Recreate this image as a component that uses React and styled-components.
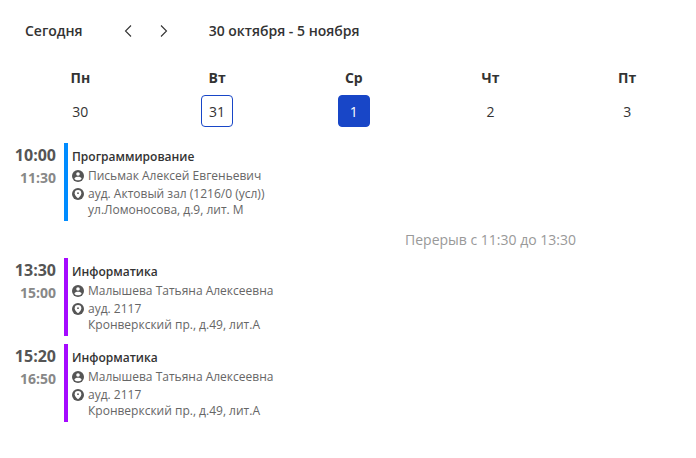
import React from "react";
import styled, { createGlobalStyle } from "styled-components";

const GlobalStyle = createGlobalStyle`
  *, *::before, *::after { box-sizing: border-box; }
  body {
    margin: 0;
    background: #fff;
    color: #333;
    font-family: "Open Sans", "Noto Sans", sans-serif;
    font-size: 14px;
    line-height: 20px;
  }
`;

const Page = styled.main`
  padding: 16px 12px;
  overflow: hidden;
`;

const Toolbar = styled.header`
  display: flex;
  align-items: center;
  height: 30px;
  padding-left: 13px;
`;

const TextButton = styled.button`
  margin: 0 31px 0 0;
  padding: 0;
  border: 0;
  background: none;
  color: inherit;
  font: inherit;
  font-weight: 600;
  cursor: pointer;
`;

const Pager = styled.nav`
  display: flex;
  gap: 8px;
  margin-right: 31px;
`;

const ArrowButton = styled.button`
  display: grid;
  place-items: center;
  width: 28px;
  height: 28px;
  padding: 0;
  border: 0;
  background: none;
  color: inherit;
  cursor: pointer;
`;

const Period = styled.h1`
  margin: 0;
  font-size: 14px;
  line-height: 20px;
  font-weight: 600;
`;

const Calendar = styled.section`
  min-width: 957px;
`;

const Week = styled.div`
  display: grid;
  grid-template-columns: repeat(7, 1fr);
  padding: 22px 0 16px;
`;

const Day = styled.div`
  display: flex;
  flex-direction: column;
  align-items: center;
  gap: 7px;
`;

const Weekday = styled.span`
  font-weight: 700;
`;

const DateButton = styled.button`
  width: 32px;
  height: 32px;
  padding: 1px 0 0;
  border: 1px solid ${({ $state }) => ($state ? "#1846c7" : "transparent")};
  border-radius: 4px;
  background: ${({ $state }) => ($state === "selected" ? "#1846c7" : "transparent")};
  color: ${({ $state }) => ($state === "selected" ? "#fff" : "inherit")};
  font: inherit;
  cursor: pointer;
`;

const Lesson = styled.article`
  display: grid;
  grid-template-columns: 44px 1fr;
  gap: 8px;
  margin-bottom: ${({ $last }) => ($last ? "0" : "8px")};
`;

const Times = styled.div`
  display: flex;
  flex-direction: column;
  align-items: flex-end;
  gap: 1px;
  padding-top: 1px;
`;

const StartTime = styled.time`
  color: #555;
  font-size: 16px;
  line-height: 22px;
  font-weight: 700;
`;

const EndTime = styled.time`
  color: #888;
  font-size: 14px;
  line-height: 22px;
  font-weight: 700;
`;

const Details = styled.div`
  padding: 5px 0 3px 4px;
  border-left: 4px solid ${({ $color }) => $color};
  color: #666;
  font-size: 12px;
  line-height: 16px;
`;

const Subject = styled.h2`
  margin: 0 0 2px;
  color: #333;
  font-size: 12px;
  line-height: 18px;
  font-weight: 600;
`;

const Info = styled.div`
  display: flex;
  gap: 4px;
  margin-bottom: ${({ $spaced }) => ($spaced ? "2px" : "0")};

  svg {
    flex: none;
    margin-top: 2px;
  }
`;

const Address = styled.div`
  display: flex;
  flex-direction: column;
`;

const Break = styled.p`
  margin: 0;
  padding: 9px 0 8px;
  color: #999;
  text-align: center;
`;

const Arrow = ({ next }) => (
  <svg width="14" height="14" viewBox="0 0 14 14" fill="none" stroke="currentColor" strokeWidth="1.1" aria-hidden="true">
    <path d={next ? "M4 1.5 9.5 7 4 12.5" : "M10 1.5 4.5 7l5.5 5.5"} />
  </svg>
);

const PersonIcon = () => (
  <svg width="12" height="12" viewBox="0 0 12 12" aria-hidden="true">
    <circle cx="6" cy="6" r="6" fill="#555" />
    <circle cx="6" cy="4" r="1.8" fill="#fff" />
    <path d="M2.4 8.7C2.8 7.4 4.2 6.8 6 6.8s3.2.6 3.6 1.9C8.8 9.8 7.5 10.3 6 10.3S3.2 9.8 2.4 8.7Z" fill="#fff" />
  </svg>
);

const PlaceIcon = () => (
  <svg width="12" height="12" viewBox="0 0 12 12" aria-hidden="true">
    <circle cx="6" cy="6" r="6" fill="#555" />
    <path d="M6 2a3.3 3.3 0 0 0-3.3 3.3c0 2 1.7 3.7 3.3 5 1.6-1.3 3.3-3 3.3-5A3.3 3.3 0 0 0 6 2Z" fill="#fff" />
    <circle cx="6" cy="5.2" r="0.9" fill="#555" />
  </svg>
);

const days = [
  { name: "Пн", date: 30 },
  { name: "Вт", date: 31, state: "today" },
  { name: "Ср", date: 1, state: "selected" },
  { name: "Чт", date: 2 },
  { name: "Пт", date: 3 },
];

const firstLesson = {
  start: "10:00",
  end: "11:30",
  color: "#008cff",
  subject: "Программирование",
  teacher: "Письмак Алексей Евгеньевич",
  room: "ауд. Актовый зал (1216/0 (усл))",
  address: "ул.Ломоносова, д.9, лит. М",
};

const laterLessons = [
  { start: "13:30", end: "15:00" },
  { start: "15:20", end: "16:50" },
].map((times) => ({
  ...times,
  color: "#a50aff",
  subject: "Информатика",
  teacher: "Малышева Татьяна Алексеевна",
  room: "ауд. 2117",
  address: "Кронверкский пр., д.49, лит.А",
}));

const LessonRow = ({ lesson, last }) => (
  <Lesson $last={last}>
    <Times>
      <StartTime>{lesson.start}</StartTime>
      <EndTime>{lesson.end}</EndTime>
    </Times>
    <Details $color={lesson.color}>
      <Subject>{lesson.subject}</Subject>
      <Info $spaced>
        <PersonIcon />
        <span>{lesson.teacher}</span>
      </Info>
      <Info>
        <PlaceIcon />
        <Address>
          <span>{lesson.room}</span>
          <span>{lesson.address}</span>
        </Address>
      </Info>
    </Details>
  </Lesson>
);

export default function App() {
  return (
    <Page>
      <GlobalStyle />
      <Toolbar>
        <TextButton type="button">Сегодня</TextButton>
        <Pager aria-label="Недели">
          <ArrowButton type="button" aria-label="Предыдущая неделя"><Arrow /></ArrowButton>
          <ArrowButton type="button" aria-label="Следующая неделя"><Arrow next /></ArrowButton>
        </Pager>
        <Period>30 октября - 5 ноября</Period>
      </Toolbar>
      <Calendar>
        <Week>
          {days.map((day) => (
            <Day key={day.name}>
              <Weekday>{day.name}</Weekday>
              <DateButton type="button" $state={day.state}>{day.date}</DateButton>
            </Day>
          ))}
        </Week>
        <LessonRow lesson={firstLesson} last />
        <Break>Перерыв с 11:30 до 13:30</Break>
        {laterLessons.map((lesson) => (
          <LessonRow key={lesson.start} lesson={lesson} />
        ))}
      </Calendar>
    </Page>
  );
}
